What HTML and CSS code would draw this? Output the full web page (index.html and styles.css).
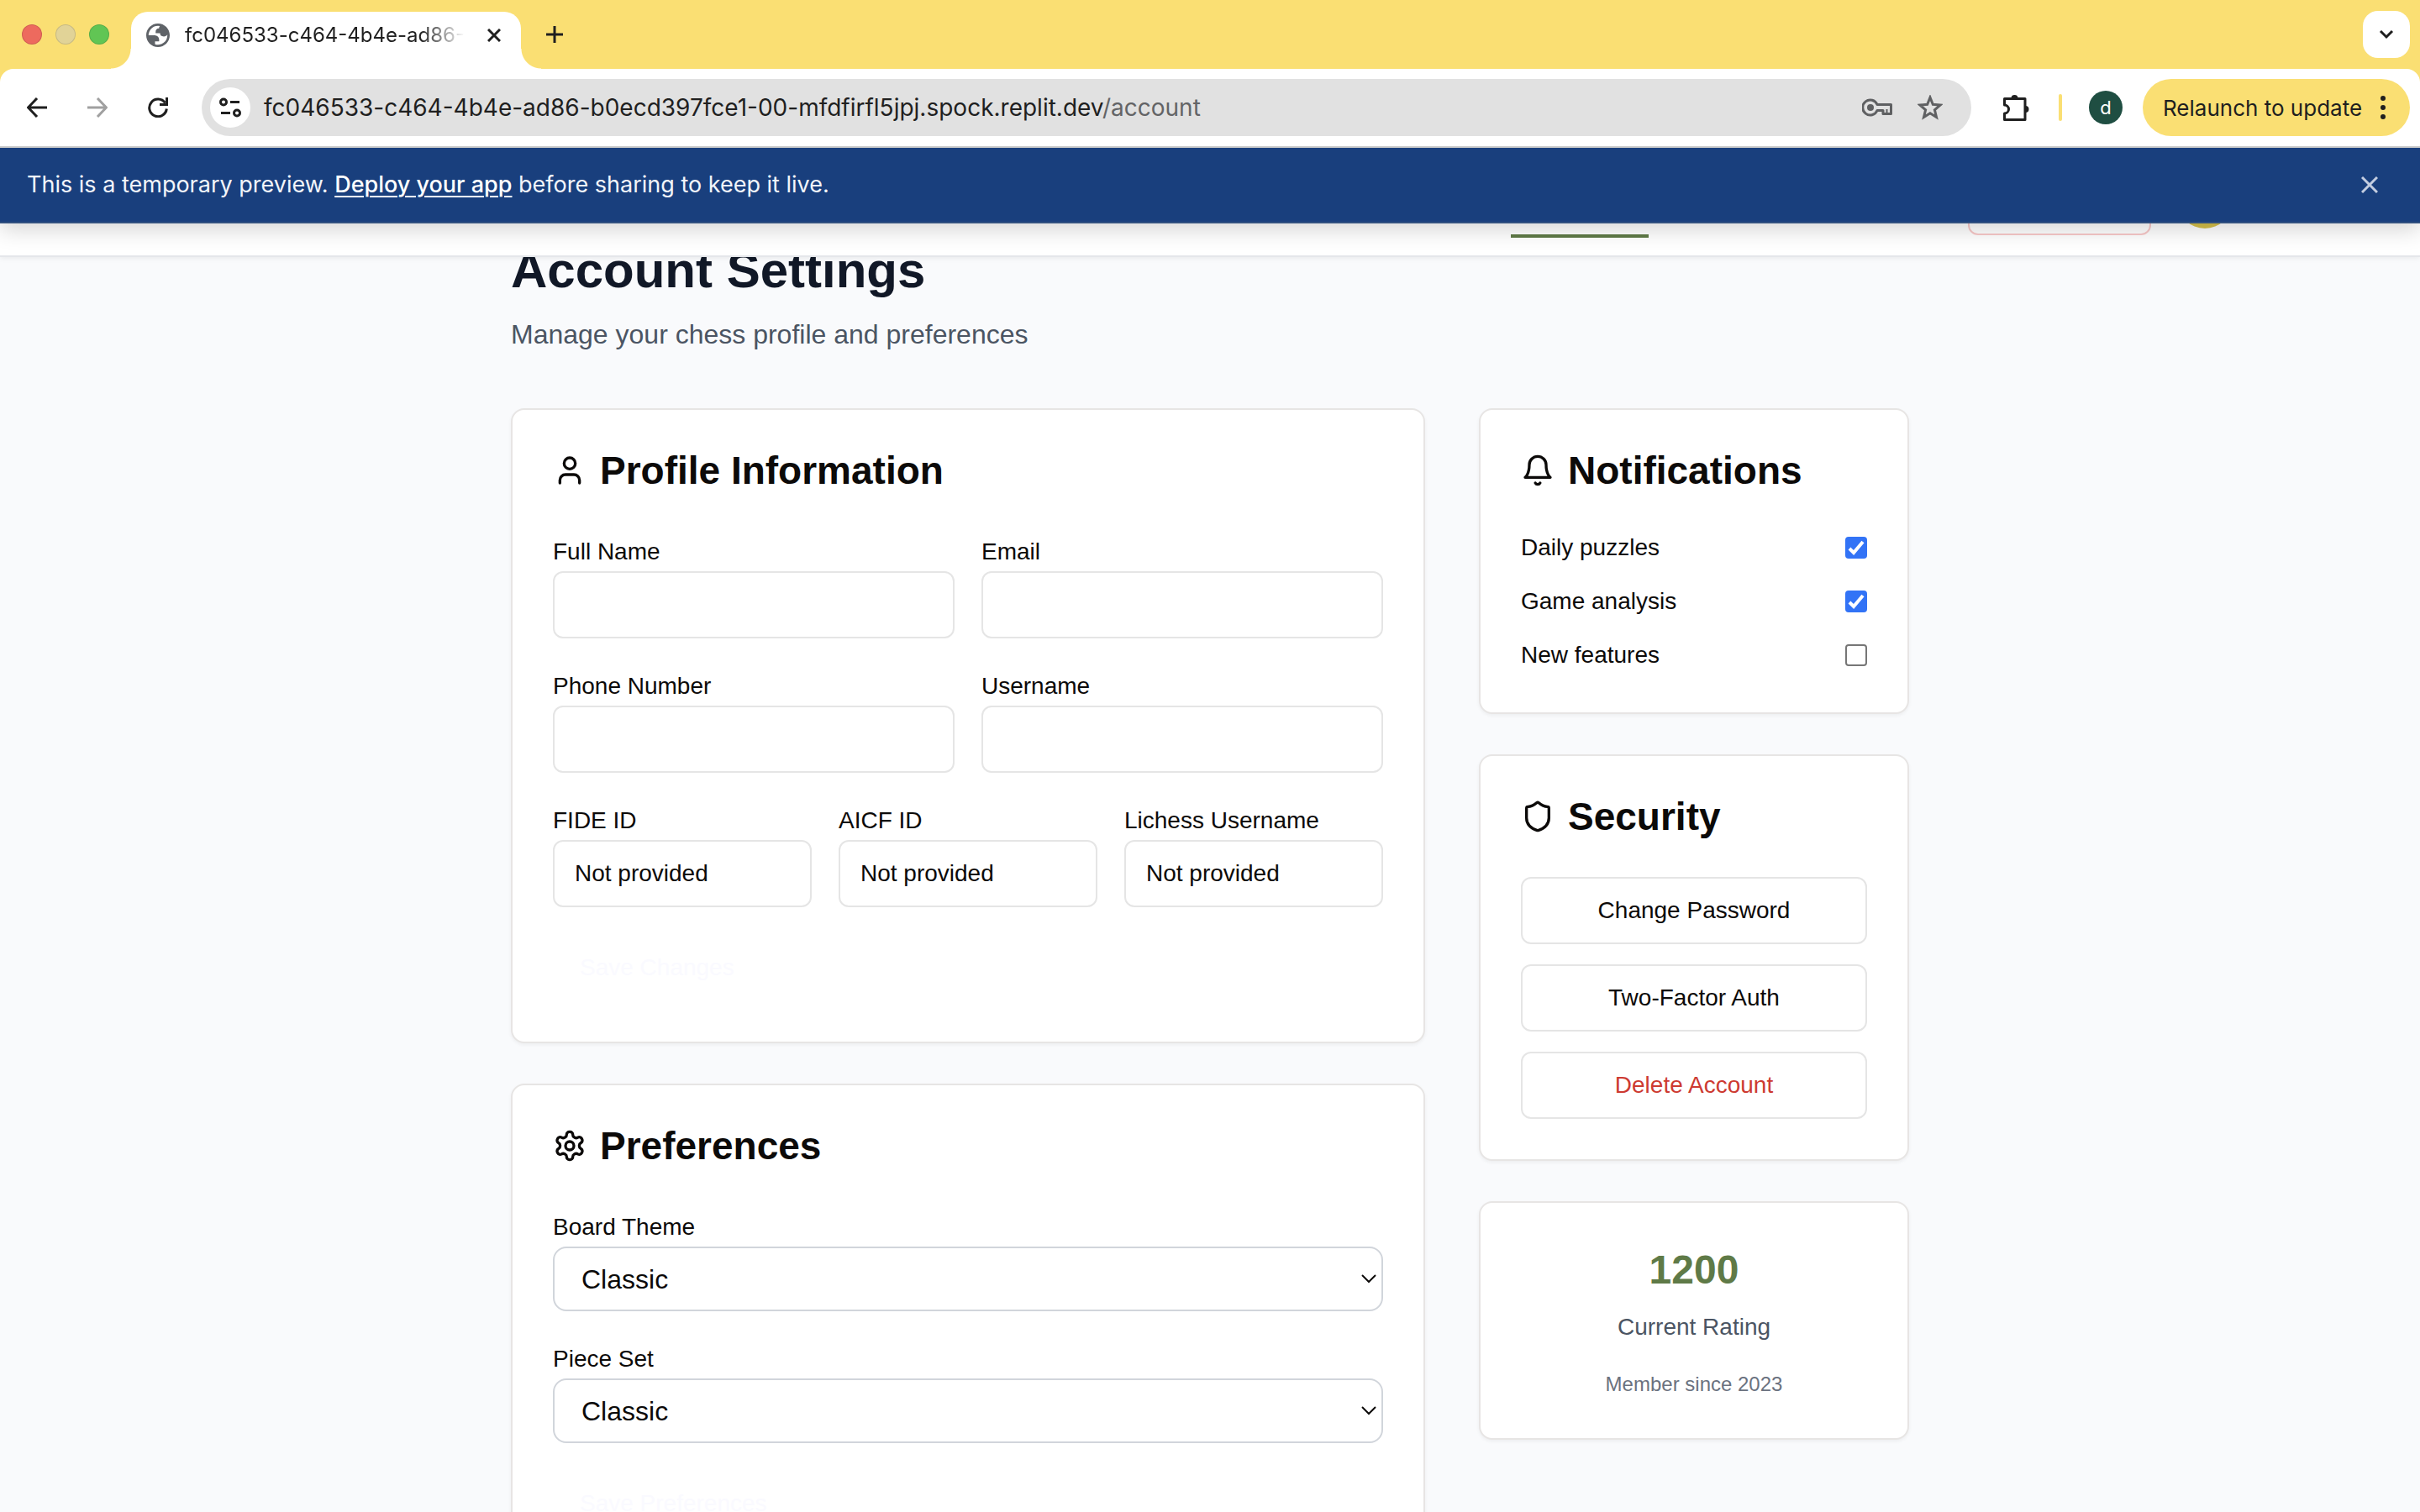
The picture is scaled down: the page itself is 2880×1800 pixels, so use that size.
FILE: index.html
```html
<!DOCTYPE html>
<html lang="en">
<head>
<meta charset="utf-8">
<title>Account Settings</title>
<link rel="stylesheet" href="styles.css">
</head>
<body>
<div class="browser">
  <div class="tab-strip">
    <div class="lights">
      <span class="light light-close"></span>
      <span class="light light-min"></span>
      <span class="light light-max"></span>
    </div>
    <div class="tab">
      <svg class="favicon" viewBox="2 2 20 20" aria-hidden="true"><path fill="#5f6368" fill-rule="evenodd" d="M12 2C6.480 2 2 6.480 2 12s4.480 10 10 10 10-4.480 10-10S17.520 2 12 2zM4 12h4.400c3.407.022 4.922 1.730 4.543 5.127H9.488v2.470a8.004 8.004 0 0 0 10.498-8.083C19.327 12.504 18.332 13 17 13c-2.137 0-3.206-.916-3.206-2.750h-3.748c-.274-2.728.683-4.092 2.870-4.092 0-.975.327-1.597.811-1.970A8.004 8.004 0 0 0 4 12z"/></svg>
      <span class="tab-title">fc046533-c464-4b4e-ad86-</span>
      <button class="icon-button tab-close" aria-label="Close tab"><svg width="16" height="16" viewBox="0 0 16 16"><path d="M1 1l14 14M15 1L1 15" stroke="#1f1f1f" stroke-width="3"/></svg></button>
    </div>
    <button class="icon-button new-tab" aria-label="New tab"><svg width="20" height="20" viewBox="0 0 20 20"><path d="M10 0v20M0 10h20" stroke="#1f1f1f" stroke-width="3"/></svg></button>
    <button class="icon-button tab-search" aria-label="Search tabs"><svg width="18" height="12" viewBox="0 0 18 12"><path d="M2 2l7 7 7-7" fill="none" stroke="#1f1f1f" stroke-width="3"/></svg></button>
  </div>

  <div class="toolbar">
    <div class="nav-buttons">
      <button class="icon-button" aria-label="Back"><svg width="24" height="24" viewBox="0 0 24 24"><path d="M24 12H2M12 1L1.500 12 12 23" fill="none" stroke="#1f1f1f" stroke-width="3"/></svg></button>
      <button class="icon-button" aria-label="Forward"><svg width="24" height="24" viewBox="0 0 24 24"><path d="M0 12h22M12 1l10.500 11L12 23" fill="none" stroke="#a0a0a0" stroke-width="3"/></svg></button>
      <button class="icon-button" aria-label="Reload"><svg width="24" height="24" viewBox="0 0 24 24"><path d="M20.500 6.500A10.300 10.300 0 1 0 22.300 13.500" fill="none" stroke="#1f1f1f" stroke-width="3"/><path d="M22.500 0v8.500H14" fill="none" stroke="#1f1f1f" stroke-width="3"/></svg></button>
    </div>
    <div class="omnibox">
      <button class="icon-button site-info" aria-label="Site information"><svg width="26" height="24" viewBox="0 0 26 24" fill="none" stroke="#1f1f1f" stroke-width="3"><circle cx="5" cy="5.500" r="3.500"/><path d="M13 5.500h11M2 18.500h11"/><circle cx="21" cy="18.500" r="3.500"/></svg></button>
      <div class="url">fc046533-c464-4b4e-ad86-b0ecd397fce1-00-mfdfirfl5jpj.spock.replit.dev<span class="url-path">/account</span></div>
      <button class="icon-button" aria-label="Passwords"><svg width="36" height="22" viewBox="0 0 36 22" fill="none" stroke="#5f6062" stroke-width="3"><path d="M18 7.500A9 9 0 1 0 18 14.500h7v4h9.500v-11z" stroke-linejoin="round"/><circle cx="10" cy="11" r="4" fill="#5f6062" stroke="none"/><path d="M29.500 13v5" stroke-width="2"/></svg></button>
      <button class="icon-button" aria-label="Bookmark"><svg width="30" height="30" viewBox="0 0 30 30"><path d="M15 3l3.300 8.300 8.900.7-6.800 5.800 2.100 8.700-7.500-4.700-7.500 4.700 2.100-8.700L2.800 12l8.900-.7z" fill="none" stroke="#5f6062" stroke-width="3"/></svg></button>
    </div>
    <button class="icon-button extensions" aria-label="Extensions"><svg width="34" height="34" viewBox="0 0 34 34"><path d="M3.500 6.500h24.500v25H3.500v-7.500a5 5 0 0 0 0-10z" fill="none" stroke="#1f1f1f" stroke-width="3" stroke-linejoin="round"/><path d="M11.500 6a4 4 0 0 1 8 0zM28.500 15a4 4 0 0 1 0 8z" fill="#1f1f1f"/></svg></button>
    <span class="divider"></span>
    <button class="profile" aria-label="Profile">d</button>
    <button class="relaunch">Relaunch to update <svg width="6" height="28" viewBox="0 0 6 28" fill="#1f1f1f"><circle cx="3" cy="3" r="3"/><circle cx="3" cy="14" r="3"/><circle cx="3" cy="25" r="3"/></svg></button>
  </div>

  <div class="viewport">
    <div class="banner">
      <p>This is a temporary preview. <a href="#deploy">Deploy your app</a> before sharing to keep it live.</p>
      <button class="icon-button" aria-label="Dismiss"><svg width="20" height="20" viewBox="0 0 20 20"><path d="M1 1l18 18M19 1L1 19" stroke="#c3cde0" stroke-width="3"/></svg></button>
    </div>
    <header class="site-header">
      <span class="nav-active"></span>
      <span class="logout"></span>
      <span class="avatar"></span>
    </header>

    <main class="page">
      <h1>Account Settings</h1>
      <p class="subtitle">Manage your chess profile and preferences</p>
      <div class="columns">
        <div class="main-column">
          <section class="card">
            <h2><svg class="icon" viewBox="0 0 24 24"><path d="M19 21v-2a4 4 0 0 0-4-4H9a4 4 0 0 0-4 4v2"/><circle cx="12" cy="7" r="4"/></svg>Profile Information</h2>
            <form class="form">
              <div class="fields two">
                <div class="field"><label for="full-name">Full Name</label><input type="text" id="full-name"></div>
                <div class="field"><label for="email">Email</label><input type="email" id="email"></div>
                <div class="field"><label for="phone">Phone Number</label><input type="tel" id="phone"></div>
                <div class="field"><label for="username">Username</label><input type="text" id="username"></div>
              </div>
              <div class="fields three">
                <div class="field"><label for="fide">FIDE ID</label><input type="text" id="fide" value="Not provided"></div>
                <div class="field"><label for="aicf">AICF ID</label><input type="text" id="aicf" value="Not provided"></div>
                <div class="field"><label for="lichess">Lichess Username</label><input type="text" id="lichess" value="Not provided"></div>
              </div>
              <button type="button" class="save">Save Changes</button>
            </form>
          </section>

          <section class="card">
            <h2><svg class="icon" viewBox="0 0 24 24"><path d="M12.220 2h-.44a2 2 0 0 0-2 2v.18a2 2 0 0 1-1 1.730l-.43.25a2 2 0 0 1-2 0l-.15-.08a2 2 0 0 0-2.730.73l-.22.38a2 2 0 0 0 .73 2.730l.15.1a2 2 0 0 1 1 1.720v.51a2 2 0 0 1-1 1.740l-.15.09a2 2 0 0 0-.73 2.730l.22.38a2 2 0 0 0 2.730.73l.15-.08a2 2 0 0 1 2 0l.43.25a2 2 0 0 1 1 1.730V20a2 2 0 0 0 2 2h.44a2 2 0 0 0 2-2v-.18a2 2 0 0 1 1-1.730l.43-.25a2 2 0 0 1 2 0l.15.08a2 2 0 0 0 2.730-.73l.22-.39a2 2 0 0 0-.73-2.730l-.15-.08a2 2 0 0 1-1-1.740v-.5a2 2 0 0 1 1-1.740l.15-.09a2 2 0 0 0 .73-2.730l-.22-.38a2 2 0 0 0-2.730-.73l-.15.08a2 2 0 0 1-2 0l-.43-.25a2 2 0 0 1-1-1.730V4a2 2 0 0 0-2-2z"/><circle cx="12" cy="12" r="3"/></svg>Preferences</h2>
            <form class="form">
              <div class="field"><label for="board">Board Theme</label>
                <div class="select-box"><select id="board"><option>Classic</option></select><svg class="caret" width="18" height="12" viewBox="0 0 18 12"><path d="M1 2l8 8 8-8"/></svg></div></div>
              <div class="field"><label for="pieces">Piece Set</label>
                <div class="select-box"><select id="pieces"><option>Classic</option></select><svg class="caret" width="18" height="12" viewBox="0 0 18 12"><path d="M1 2l8 8 8-8"/></svg></div></div>
              <button type="button" class="save">Save Preferences</button>
            </form>
          </section>
        </div>

        <aside class="side-column">
          <section class="card">
            <h2><svg class="icon" viewBox="0 0 24 24"><path d="M6 8a6 6 0 0 1 12 0c0 7 3 9 3 9H3s3-2 3-9"/><path d="M10.300 21a1.940 1.940 0 0 0 3.400 0"/></svg>Notifications</h2>
            <div class="stack">
              <label class="toggle">Daily puzzles<input type="checkbox" checked></label>
              <label class="toggle">Game analysis<input type="checkbox" checked></label>
              <label class="toggle">New features<input type="checkbox"></label>
            </div>
          </section>
          <section class="card">
            <h2><svg class="icon" viewBox="0 0 24 24"><path d="M20 13c0 5-3.500 7.500-7.660 8.950a1 1 0 0 1-.67-.01C7.500 20.500 4 18 4 13V6a1 1 0 0 1 1-1c2 0 4.500-1.200 6.240-2.720a1.170 1.170 0 0 1 1.520 0C14.510 3.810 17 5 19 5a1 1 0 0 1 1 1z"/></svg>Security</h2>
            <div class="stack">
              <button class="action">Change Password</button>
              <button class="action">Two-Factor Auth</button>
              <button class="action danger">Delete Account</button>
            </div>
          </section>
          <section class="card rating">
            <p class="score">1200</p>
            <p class="score-label">Current Rating</p>
            <p class="since">Member since 2023</p>
          </section>
        </aside>
      </div>
    </main>
  </div>
</div>
</body>
</html>
```

FILE: styles.css
```css
* { box-sizing: border-box; margin: 0; }

body {
  font-family: "Liberation Sans", Arial, sans-serif;
  font-size: 32px;
  line-height: 48px;
  color: #0c0a09;
}

button, input, select { font-family: inherit; color: inherit; }
svg { display: block; flex: none; }

.icon-button {
  display: flex;
  align-items: center;
  justify-content: center;
  padding: 0;
  border: 0;
  background: none;
}

/* Browser window */
.browser {
  display: flex;
  flex-direction: column;
  height: 100vh;
  overflow: hidden;
  background: #fadf73;
}

.tab-strip {
  display: flex;
  align-items: center;
  height: 82px;
  padding: 0 12px 0 26px;
  font-family: Inter, sans-serif;
}

.lights { display: flex; gap: 16px; width: 130px; }
.light { width: 24px; height: 24px; border-radius: 50%; border: 1px solid rgba(0, 0, 0, 0.12); }
.light-close { background: #ed6a5e; }
.light-min { background: #e1d397; }
.light-max { background: #61c554; }

.tab {
  position: relative;
  display: flex;
  align-items: center;
  align-self: flex-end;
  width: 464px;
  height: 68px;
  padding: 0 24px 12px 18px;
  border-radius: 20px 20px 0 0;
  background: #fff;
}
.tab::before, .tab::after {
  content: "";
  position: absolute;
  bottom: 0;
  width: 24px;
  height: 24px;
}
.tab::before { right: 100%; background: radial-gradient(circle at 0 0, transparent 23px, #fff 24px); }
.tab::after { left: 100%; background: radial-gradient(circle at 100% 0, transparent 23px, #fff 24px); }
.favicon { width: 28px; height: 28px; margin-right: 18px; }
.tab-title {
  white-space: nowrap;
  font-size: 24px;
  line-height: 32px;
  color: #1f1f1f;
  -webkit-mask-image: linear-gradient(90deg, #000 84%, transparent);
  mask-image: linear-gradient(90deg, #000 84%, transparent);
}
.tab-close { margin-left: auto; }
.new-tab { margin-left: 30px; }
.tab-search {
  width: 56px;
  height: 56px;
  margin-left: auto;
  border-radius: 18px;
  background: #fff;
}

.toolbar {
  display: flex;
  align-items: center;
  height: 94px;
  padding: 0 12px 0 32px;
  border-bottom: 2px solid #cbcbcb;
  border-radius: 16px 16px 0 0;
  background: #fff;
  font-family: Inter, sans-serif;
}
.nav-buttons { display: flex; gap: 48px; width: 208px; }
.omnibox {
  display: flex;
  flex: 1;
  align-items: center;
  gap: 30px;
  height: 68px;
  padding: 0 34px 0 10px;
  border-radius: 34px;
  background: #e1e1e1;
}
.site-info { width: 48px; height: 48px; margin-right: -14px; border-radius: 50%; background: #fff; }
.url { flex: 1; font-size: 28px; line-height: 40px; color: #1f1f1f; white-space: nowrap; }
.url-path { color: #636466; }
.extensions { margin: 0 34px 0 36px; }
.divider { width: 4px; height: 32px; border-radius: 2px; background: #fadf73; }
.profile {
  width: 40px;
  height: 40px;
  margin: 0 24px 0 32px;
  padding: 0;
  border: 0;
  border-radius: 50%;
  background: #1f4e42;
  color: #fff;
  font-size: 22px;
  line-height: 40px;
}
.relaunch {
  display: flex;
  align-items: center;
  justify-content: space-between;
  width: 318px;
  height: 68px;
  padding: 0 29px 0 24px;
  border: 0;
  border-radius: 34px;
  background: #fadf73;
  color: #1f1f1f;
  font-size: 26px;
  white-space: nowrap;
}

/* Web page */
.viewport { position: relative; flex: 1; min-height: 0; overflow: hidden; background: #f9fafc; }

.banner {
  position: absolute;
  z-index: 2;
  inset: 0 0 auto 0;
  display: flex;
  align-items: center;
  justify-content: space-between;
  height: 90px;
  padding: 0 50px 0 32px;
  border-bottom: 2px solid #31507f;
  background: #193f7d;
  box-shadow: 0 8px 24px rgba(0, 0, 0, 0.16);
  color: #f2f5fa;
  font-family: Inter, sans-serif;
  font-size: 27px;
  line-height: 40px;
}
.banner a { color: #fff; font-weight: 500; text-decoration-thickness: 2px; text-underline-offset: 4px; }

.site-header {
  position: relative;
  z-index: 1;
  display: flex;
  align-items: center;
  justify-content: flex-end;
  height: 130px;
  padding-right: 224px;
  border-bottom: 2px solid #e5e7eb;
  background: #fff;
  box-shadow: 0 2px 6px rgba(0, 0, 0, 0.06);
}
.nav-active { width: 164px; height: 86px; margin-right: 380px; border-bottom: 4px solid #5f7a47; }
.logout { width: 218px; height: 80px; margin-right: 32px; border: 2px solid #f8c9c9; border-radius: 12px; }
.avatar { width: 64px; height: 64px; border-radius: 50%; background: #d6c04a; }

.page { max-width: 1664px; margin: -20px auto 0; }
h1 { font-size: 60px; line-height: 72px; color: #111827; }
.subtitle { margin: 16px 0 64px; color: #4b5563; }

.columns { display: grid; grid-template-columns: repeat(3, 1fr); gap: 64px; align-items: start; }
.main-column { grid-column: span 2; }
.main-column, .side-column { display: grid; gap: 48px; }

.card {
  padding: 48px;
  border: 2px solid #e7e5e4;
  border-radius: 16px;
  background: #fff;
  box-shadow: 0 2px 4px rgba(0, 0, 0, 0.05);
}
h2 { display: flex; align-items: center; gap: 16px; margin-bottom: 48px; font-size: 46px; line-height: 48px; }
.icon {
  width: 40px;
  height: 40px;
  fill: none;
  stroke: currentColor;
  stroke-width: 2;
  stroke-linecap: round;
  stroke-linejoin: round;
}

.form, .fields { display: grid; gap: 32px; }
.two { grid-template-columns: repeat(2, 1fr); }
.three { grid-template-columns: repeat(3, 1fr); }
.field label { display: block; padding-top: 2px; font-size: 28px; line-height: 46px; }
.field input {
  display: block;
  width: 100%;
  height: 80px;
  padding: 0 24px;
  border: 2px solid #e5e5e5;
  border-radius: 12px;
  background: #fff;
  font-size: 28px;
}
.save {
  justify-self: start;
  height: 80px;
  padding: 0 32px;
  border: 0;
  background: none;
  color: #fafaff;
  font-size: 28px;
}

.select-box { position: relative; }
select {
  display: block;
  width: 100%;
  height: 77px;
  padding: 0 32px;
  border: 2px solid #d1d5db;
  border-radius: 16px;
  background: #fff;
  font-size: 32px;
  appearance: none;
}
.caret {
  position: absolute;
  right: 8px;
  top: 32px;
  fill: none;
  stroke: #0c0a09;
  stroke-width: 2;
}

.stack { display: grid; gap: 24px; }
.toggle { display: flex; align-items: center; justify-content: space-between; font-size: 28px; line-height: 40px; }
.toggle input {
  width: 26px;
  height: 26px;
  margin: 0;
  border: 2px solid #767676;
  border-radius: 4px;
  background: #fff;
  appearance: none;
}
.toggle input:checked {
  border: 0;
  background: #3273f6 url("data:image/svg+xml,%3Csvg xmlns='http://www.w3.org/2000/svg' viewBox='0 0 26 26'%3E%3Cpath d='M5 14l5 5L21 6' fill='none' stroke='white' stroke-width='4'/%3E%3C/svg%3E");
}
.action {
  height: 80px;
  border: 2px solid #e5e5e5;
  border-radius: 12px;
  background: #fff;
  font-size: 28px;
}
.danger { color: #cd3a31; }

.rating { text-align: center; }
.score { font-size: 48px; font-weight: 700; line-height: 64px; color: #5f7a47; }
.score-label { margin-top: 16px; font-size: 28px; line-height: 40px; color: #4b5563; }
.since { margin-top: 32px; font-size: 24px; line-height: 32px; color: #6b7280; }
```
